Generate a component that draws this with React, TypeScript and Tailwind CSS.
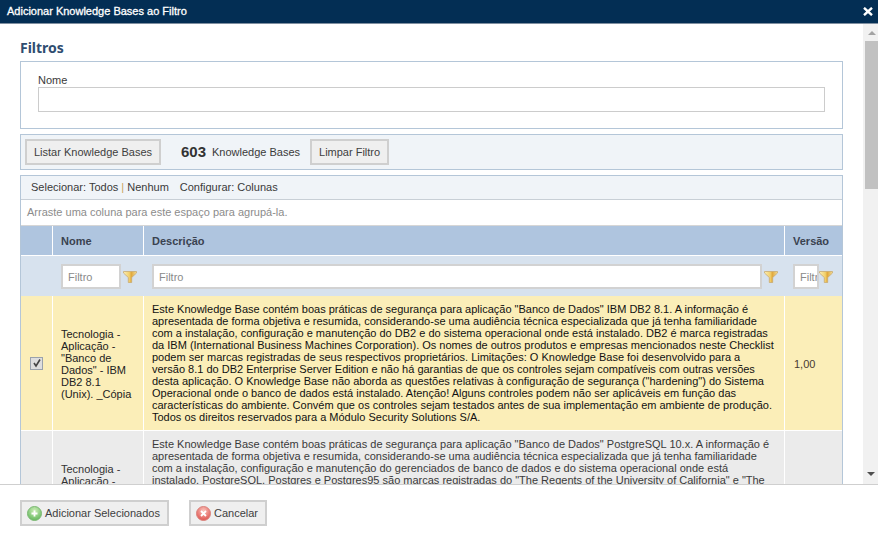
import React from "react";

const fontBody = "font-['Liberation_Sans',Arial,sans-serif]";

function Funnel() {
	return (
		<svg width="14" height="12" viewBox="0 0 14 12" className="shrink-0">
			<defs>
				<linearGradient id="fn" x1="0" y1="0" x2="1" y2="0">
					<stop offset="0" stopColor="#fbeeb4" />
					<stop offset="0.45" stopColor="#f2cf6a" />
					<stop offset="0.6" stopColor="#e0a83c" />
					<stop offset="1" stopColor="#f3dc96" />
				</linearGradient>
			</defs>
			<path d="M0.5 0.5H13.5V2L8.7 6.5V11.5H5.3V6.5L0.5 2Z" fill="url(#fn)" stroke="#c8ab72" strokeWidth="0.8" />
		</svg>
	);
}

function RoundIcon({ from, to, ring, kind }: { from: string; to: string; ring: string; kind: "plus" | "x" }) {
	const id = `ri-${kind}`;
	return (
		<svg width="15" height="15" viewBox="0 0 15 15" className="shrink-0">
			<defs>
				<radialGradient id={id} cx="0.5" cy="0.3" r="0.75">
					<stop offset="0" stopColor={from} />
					<stop offset="1" stopColor={to} />
				</radialGradient>
			</defs>
			<circle cx="7.5" cy="7.5" r="7" fill={`url(#${id})`} stroke={ring} />
			{kind === "plus" ? (
				<path d="M7.5 4.5V10.5M4.5 7.5H10.5" stroke="#fff" strokeWidth="1.8" />
			) : (
				<path d="M5 5L10 10M10 5L5 10" stroke="#fff" strokeWidth="1.8" />
			)}
		</svg>
	);
}

const filterInput = "h-[25px] border-2 border-[#d2d2d2] bg-white pl-[5px] pt-px text-[11px] text-[#8a8a8a] min-w-0";
const button = "h-[26px] border-2 border-[#cfcfcf] bg-[#efefef] text-[11px] text-[#404040]";
const headCell = "flex h-[29px] items-center bg-[#afc5df] pl-2 pt-px font-bold text-[#3a4250]";

export default function App() {
	return (
		<div className={`${fontBody} flex h-[540px] w-[878px] flex-col overflow-hidden bg-white text-[11px] text-[#3a3a3a]`}>
			<div className="flex h-6 shrink-0 items-center justify-between border-b border-[#7f8fa0] bg-[#032e54] pl-[7px] pr-[5px]">
				<span className="text-[11px] text-white [-webkit-text-stroke:0.3px_white]">Adicionar Knowledge Bases ao Filtro</span>
				<svg width="10" height="9" viewBox="0 0 10 9">
					<path d="M1 0.8L9 8.2M9 0.8L1 8.2" stroke="#fff" strokeWidth="2.4" />
				</svg>
			</div>

			<div className="flex min-h-0 flex-1">
				<div className="min-w-0 flex-1 overflow-hidden pl-5 pr-5">
					<h2 className="mt-4 h-[21px] font-['Noto_Sans',sans-serif] text-sm leading-[16px] font-bold text-[#2f4d70]">Filtros</h2>

					<div className="h-[68px] border border-[#b4c6d8] pl-[17px] pr-[17px] pt-3">
						<div className="h-3 leading-[13px]">Nome</div>
						<div className="mt-px h-[25px] border border-[#cccccc]" />
					</div>

					<div className="mt-[5px] flex h-9 items-center border border-[#b4c6d8] bg-[#f0f4f8] pl-1">
						<button className={`${button} w-[136px]`}>Listar Knowledge Bases</button>
						<span className="ml-5 text-[15px] font-bold text-[#333]">603</span>
						<span className="ml-[6px] mt-px text-[11px]">Knowledge Bases</span>
						<button className={`${button} ml-[10px] w-[79px]`}>Limpar Filtro</button>
					</div>

					<div className="mt-[5px] border-x border-t border-[#b4c6d8]">
						<div className="flex h-6 items-center border-b border-[#c8cfd6] bg-[#f0f4f8] pl-[10px] text-[11px]">
							<span>Selecionar: Todos <span className="text-[#c9a25c]">|</span> Nenhum</span>
							<span className="ml-[11px]">Configurar: Colunas</span>
						</div>
						<div className="flex h-[26px] items-center border-b border-[#d6d6d6] pb-px pl-[6px] text-[#8c8c8c]">Arraste uma coluna para este espaço para agrupá-la.</div>

						<div className="grid grid-cols-[31px_90px_640px_1fr] gap-x-px">
							<div className="h-[29px] bg-[#afc5df]" />
							<div className={headCell}>Nome</div>
							<div className={headCell}>Descrição</div>
							<div className={headCell}>Versão</div>

							<div className="col-span-4 grid h-[41px] grid-cols-subgrid items-center border-t border-white bg-[#d7e2ee] pt-px">
								<div />
								<div className="flex items-center gap-[2px] pl-2">
									<div className={`${filterInput} flex w-[60px] items-center`}>Filtro</div>
									<Funnel />
								</div>
								<div className="flex items-center gap-[2px] pl-2">
									<div className={`${filterInput} flex w-[610px] items-center`}>Filtro</div>
									<Funnel />
								</div>
								<div className="flex items-center pl-2">
									<div className={`${filterInput} flex w-[26px] items-center overflow-hidden`}>Filtr</div>
									<Funnel />
								</div>
							</div>

							<div className="flex h-[134px] items-center justify-center bg-[#fbeeb8]">
								<span className="flex h-[13px] w-[13px] items-center justify-center border border-[#9aa2ac] bg-[#dedede]">
									<svg width="10" height="10" viewBox="0 0 10 10">
										<path d="M2 5L4 8L8 1.5" fill="none" stroke="#444" strokeWidth="1.6" />
									</svg>
								</span>
							</div>
							<div className="flex h-[134px] items-center bg-[#fbeeb8] pl-2 pr-2 pt-[2px] leading-3 text-[#222]">
								Tecnologia - Aplicação - "Banco de Dados" - IBM DB2 8.1 (Unix). _Cópia
							</div>
							<div className="flex h-[134px] items-center bg-[#fbeeb8] pl-2 pr-2 leading-3 text-[#111]">
								<p>
									Este Knowledge Base contém boas práticas de segurança para aplicação "Banco de Dados" IBM DB2 8.1. A informação é apresentada de forma objetiva e resumida, considerando-se uma audiência técnica especializada que já tenha familiaridade com a instalação, configuração e manutenção do DB2 e do sistema operacional onde está instalado. DB2 é marca registradas da IBM (International Business Machines Corporation). Os nomes de outros produtos e empresas mencionados neste Checklist podem ser marcas registradas de seus respectivos proprietários. Limitações: O Knowledge Base foi desenvolvido para a versão 8.1 do DB2 Enterprise Server Edition e não há garantias de que os controles sejam compatíveis com outras versões desta aplicação. O Knowledge Base não aborda as questões relativas à configuração de segurança ("hardening") do Sistema Operacional onde o banco de dados está instalado. Atenção! Alguns controles podem não ser aplicáveis em função das características do ambiente. Convém que os controles sejam testados antes de sua implementação em ambiente de produção. Todos os direitos reservados para a Módulo Security Solutions S/A.
								</p>
							</div>
							<div className="flex h-[134px] items-center bg-[#fbeeb8] pl-[9px] pt-[2px] text-[#4a3a30]">1,00</div>

							<div className="col-span-4 h-px bg-white" />

							<div className="h-[134px] bg-[#ebebeb]" />
							<div className="flex h-[134px] items-center bg-[#ebebeb] pl-2 pr-2 pt-[2px] leading-3 text-[#333]">
								Tecnologia - Aplicação - "Banco de Dados" - PostgreSQL 10.x
							</div>
							<div className="flex h-[134px] items-start bg-[#ebebeb] pl-2 pr-2 pt-[7px] leading-3">
								<p>
									Este Knowledge Base contém boas práticas de segurança para aplicação "Banco de Dados" PostgreSQL 10.x. A informação é apresentada de forma objetiva e resumida, considerando-se uma audiência técnica especializada que já tenha familiaridade com a instalação, configuração e manutenção do gerenciados de banco de dados e do sistema operacional onde está instalado. PostgreSQL, Postgres e Postgres95 são marcas registradas do "The Regents of the University of California" e "The PostgreSQL Global Development Group".
								</p>
							</div>
							<div className="h-[134px] bg-[#ebebeb]" />
						</div>
					</div>
				</div>

				<div className="relative w-[15px] shrink-0 bg-[#f1f1f1]">
					<div className="flex h-[17px] items-center justify-center pl-[2px]">
						<span className="h-0 w-0 border-x-[4px] border-b-[4px] border-x-transparent border-b-[#a3a3a3]" />
					</div>
					<div className="ml-[2px] h-[148px] bg-[#c1c1c1]" />
					<span className="absolute bottom-[8px] right-[3px] h-0 w-0 border-x-[4px] border-t-[4px] border-x-transparent border-t-[#505050]" />
				</div>
			</div>

			<div className="flex h-[56px] shrink-0 items-start gap-[20px] border-t border-[#cfcfcf] bg-white pl-5 pt-[15px]">
				<button className={`${button} flex w-[149px] items-center gap-[3px] pl-[5px]`}>
					<RoundIcon from="#cdeeb8" to="#5cb356" ring="#7cb874" kind="plus" />
					Adicionar Selecionados
				</button>
				<button className={`${button} flex w-[78px] items-center gap-[3px] pl-[5px]`}>
					<RoundIcon from="#fbc4bd" to="#dd4a45" ring="#d9827c" kind="x" />
					Cancelar
				</button>
			</div>
		</div>
	);
}
